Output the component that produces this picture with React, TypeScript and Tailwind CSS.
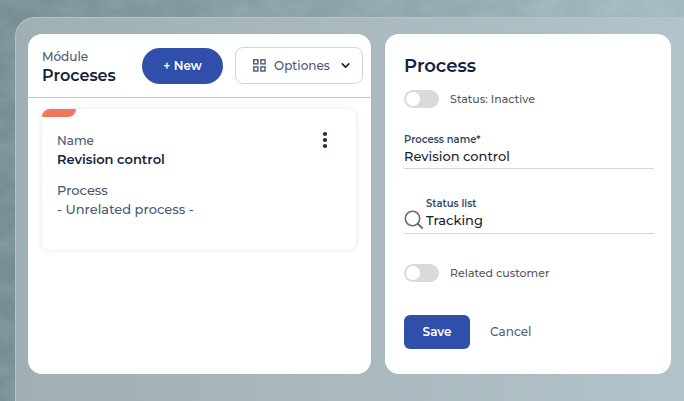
import { useState } from "react";
import { FiChevronDown } from "react-icons/fi";

const GridIcon = () => (
  <svg className="size-[13px] shrink-0 text-[#4b5a76]" viewBox="0 0 12 12" fill="none" stroke="currentColor" strokeWidth="1.3">
    <rect x="0.7" y="0.7" width="3.8" height="3.8" />
    <rect x="7.3" y="0.7" width="3.8" height="3.8" />
    <rect x="0.7" y="7.3" width="3.8" height="3.8" />
    <rect x="7.3" y="7.3" width="3.8" height="3.8" />
  </svg>
);

const SearchIcon = () => (
  <svg className="h-5 w-[22px] shrink-0 text-[#6b6b70]" viewBox="0 0 22 20" fill="none" stroke="currentColor" strokeWidth="1.6">
    <circle cx="8.5" cy="8.5" r="7.2" />
    <path d="M13.5 13.5l5.2 5" strokeWidth="2" />
  </svg>
);

const Backdrop = () => (
  <svg className="absolute inset-0 -z-10 h-full w-full opacity-10" aria-hidden="true">
    <filter id="grain">
      <feTurbulence type="fractalNoise" baseFrequency="0.03 0.05" numOctaves="5" seed="7" />
      <feColorMatrix values="0 0 0 0 1  0 0 0 0 1  0 0 0 0 1  2 0 0 0 -0.7" />
    </filter>
    <rect width="100%" height="100%" filter="url(#grain)" />
  </svg>
);

type SwitchProps = {
  label: string;
  checked: boolean;
  onChange: (value: boolean) => void;
};

const Switch = ({ label, checked, onChange }: SwitchProps) => (
  <label className="flex cursor-pointer items-center gap-[11px] text-[11px] font-medium text-[#58585e]">
    <input
      type="checkbox"
      role="switch"
      className="flex h-[18px] w-[35px] cursor-pointer appearance-none items-center rounded-full bg-[#dadada] px-[2px] before:size-[14px] before:rounded-full before:bg-white checked:justify-end checked:bg-[#304fab]"
      checked={checked}
      onChange={(e) => onChange(e.target.checked)}
    />
    {label}
  </label>
);

export default function App() {
  const [name, setName] = useState("Revision control");
  const [status, setStatus] = useState("Tracking");
  const [active, setActive] = useState(false);
  const [related, setRelated] = useState(false);

  return (
    <div className="relative isolate flex min-h-screen flex-col bg-linear-to-r from-[#768e93] via-[#8ca3a8] to-[#a4babf] pt-[17px] pl-[15px] font-['Montserrat','Inter',sans-serif]">
      <Backdrop />
      <div className="grid flex-1 grid-cols-[6fr_5fr] gap-[14px] rounded-tl-[20px] border-t border-l border-[#b4c3c8] bg-linear-to-r from-[#9fafb4] via-[#a9b9be] to-[#b2c3c9] pt-4 pr-[13px] pb-[27px] pl-3">
        {/* Process list */}
        <section className="rounded-[14px] bg-white">
          <header className="flex h-16 items-center border-b border-[#c3c8d2] pr-2 pl-[14px]">
            <div className="flex-1 pt-[2px] text-[#14233f]">
              <p className="text-[12px] leading-[18px] font-medium text-[#4b5972]">Módule</p>
              <h1 className="text-[16px] leading-5 font-semibold">Proceses</h1>
            </div>
            <button className="h-9 w-[81px] cursor-pointer rounded-full bg-[#304fab] text-[12px] font-semibold text-white">
              + New
            </button>
            <label className="ml-3 flex h-[37px] w-32 items-center rounded-lg border border-[#cfd4df] pr-[10px] pl-[17px]">
              <GridIcon />
              <select
                aria-label="Optiones"
                className="min-w-0 flex-1 cursor-pointer appearance-none pl-2 text-[12px] font-medium text-[#4b5a76] outline-none"
              >
                <option>Optiones</option>
              </select>
              <FiChevronDown className="size-[13px] shrink-0 text-[#14233f]" strokeWidth={3} />
            </label>
          </header>

          <article className="mr-[15px] ml-[14px] mt-[11px] h-[141px] overflow-hidden rounded-lg shadow-[0_0_5px_1px_#e4ebf8]">
            <div className="h-2 w-[34px] rounded-br-lg bg-[#f0775b]" />
            <div className="flex items-start justify-between pt-[14px] pr-[27px] pl-[15px]">
              <dl className="text-[13px] leading-[19px] font-medium text-[#4b5972]">
                <dt className="text-[12px]">Name</dt>
                <dd className="font-semibold text-[#14233f]">Revision control</dd>
                <dt className="mt-3">Process</dt>
                <dd>- Unrelated process -</dd>
              </dl>
              <button className="cursor-pointer text-[#1e2d4b]" aria-label="More actions">
                <svg className="h-[18px] w-2" viewBox="0 0 8 18" fill="currentColor">
                  <circle cx="4" cy="3" r="2.1" />
                  <circle cx="4" cy="9" r="2.1" />
                  <circle cx="4" cy="15" r="2.1" />
                </svg>
              </button>
            </div>
          </article>
        </section>

        {/* Edit form */}
        <form className="rounded-[14px] bg-white pt-5 pr-[17px] pl-[19px]" onSubmit={(e) => e.preventDefault()}>
          <h2 className="text-[18px] leading-6 font-semibold text-[#14233f]">Process</h2>
          <div className="mt-3">
            <Switch label="Status: Inactive" checked={active} onChange={setActive} />
          </div>

          <div className="mt-6 flex flex-col border-b border-[#d8d8dc] pb-[3px]">
            <label htmlFor="process-name" className="text-[10px] leading-4 font-semibold text-[#3a4968]">
              Process name*
            </label>
            <input
              id="process-name"
              className="h-[17px] w-full text-[13px] font-medium text-[#1b1d2b] outline-none"
              value={name}
              onChange={(e) => setName(e.target.value)}
            />
          </div>

          <div className="mt-[27px] flex items-end border-b border-[#d8d8dc] pb-[3px]">
            <SearchIcon />
            <div className="flex flex-1 flex-col">
              <label htmlFor="status-list" className="text-[10px] leading-4 font-semibold text-[#3a4968]">
                Status list
              </label>
              <input
                id="status-list"
                className="h-[18px] w-full text-[13px] font-medium text-[#1b1d2b] outline-none"
                value={status}
                onChange={(e) => setStatus(e.target.value)}
              />
            </div>
          </div>

          <div className="mt-[30px]">
            <Switch label="Related customer" checked={related} onChange={setRelated} />
          </div>

          <div className="mt-[33px] flex gap-5">
            <button type="submit" className="h-[34px] w-[66px] cursor-pointer rounded-md bg-[#304fab] text-[12px] font-semibold text-white">
              Save
            </button>
            <button type="button" className="cursor-pointer text-[12px] font-medium text-[#55607a]">
              Cancel
            </button>
          </div>
        </form>
      </div>
    </div>
  );
}
